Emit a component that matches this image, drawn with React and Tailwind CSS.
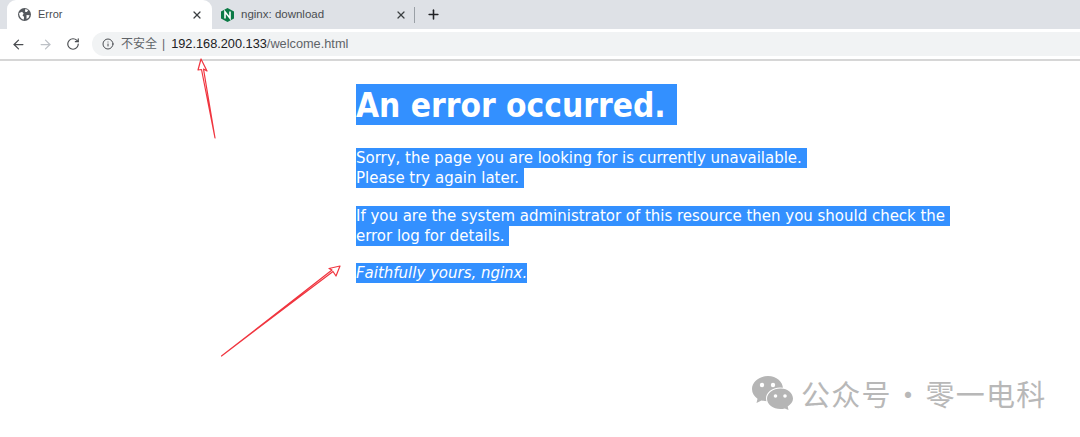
import { ArrowLeft, ArrowRight, RotateCw, Info, X, Plus } from 'lucide-react';

const Line = ({ children, className = '' }) => (
  <div className={`w-fit whitespace-pre bg-[#3390ff] text-white ${className}`}>{children}</div>
);

const GlobeIcon = () => (
  <svg width="13" height="13" viewBox="0 0 16 16">
    <circle cx="8" cy="8" r="8" fill="#55595e" />
    <path d="M1.500 6 5 4.500 7 7 5.500 9l2 2-.5 3.500C4 13.500 2 11 1.500 8zM9 1.200l3.500 1.300-1.500 2.500-2.500-.5zM10.500 8.500l3.800.3-1.300 3.200-2.500 1.500z" fill="#fff" />
  </svg>
);

const NginxIcon = () => (
  <svg width="13" height="14" viewBox="0 0 13 14">
    <polygon points="6.500,0 13,3.500 13,10.500 6.500,14 0,10.500 0,3.500" fill="#0b7a45" />
    <path d="M4 10.500V3.800l5 6.400V3.500" fill="none" stroke="#fff" strokeWidth="1.600" />
  </svg>
);

const WechatIcon = () => (
  <svg width="42" height="34" viewBox="0 0 42 34" className="shrink-0">
    <path d="M16 0C7.500 0 0 5.600 0 13c0 4 2.200 7.500 5.500 9.800L4.500 27l5-2.600c2 .6 4 .9 6.500.9 7 0 15-5.300 15-12.300C31 5.600 24.500 0 16 0z" fill="#b5b5b5" />
    <circle cx="10" cy="9" r="2.200" fill="#fff" />
    <circle cx="21" cy="9" r="2.200" fill="#fff" />
    <path d="M28 11.500c-8 0-14 5-14 11s6 10.500 14 10.500c1.600 0 3-.2 4.500-.6L37 34l-1-4c3.400-2 6-4.300 6-7.500 0-6-6-11-14-11z" fill="#fff" />
    <path d="M28.500 12.500c-7.500 0-13.500 4.600-13.500 10.200S21 33 28.500 33c1.500 0 3-.2 4.300-.6l3.700 1.600-.8-3.600c3-2 5.300-4.700 5.300-7.700 0-5.600-5.500-10.200-12-10.200z" fill="#b5b5b5" />
    <circle cx="23.500" cy="20" r="1.800" fill="#fff" />
    <circle cx="33" cy="20" r="1.800" fill="#fff" />
  </svg>
);

const Arrows = () => (
  <svg width="1080" height="437" viewBox="0 0 1080 437" fill="none" className="absolute left-0 top-0 pointer-events-none">
    <path d="M215 138 203.500 69 207 71 201 59 198 70 201.500 69.500z" stroke="#f0353f" strokeWidth="1.200" strokeLinejoin="round" />
    <path d="M221.500 356 333 271.500 336 276 340 266 329 268.500 332 270z" stroke="#f0353f" strokeWidth="1.200" strokeLinejoin="round" />
  </svg>
);

export default function App() {
  return (
    <div className="relative w-[1080px] h-[437px] overflow-hidden bg-white font-['Liberation_Sans','Noto_Sans_CJK_SC',sans-serif]">
      {/* Tab strip */}
      <div className="flex h-[29px] items-end bg-[#dee1e6] pl-[7px] text-[11px] text-[#4a4d51]">
        <div className="flex h-[29px] w-[205px] items-center rounded-t-[9px] bg-white pl-[11px] pr-[9px]">
          <GlobeIcon />
          <span className="ml-[7px] flex-1">Error</span>
          <X size={12} strokeWidth={2.500} className="text-[#3c4043]" />
        </div>
        <div className="flex h-[29px] w-[203px] items-center pl-[9px]">
          <NginxIcon />
          <span className="ml-[7px] flex-1 text-[11.500px]">nginx: download</span>
          <X size={12} strokeWidth={2.500} className="text-[#3c4043]" />
          <div className="ml-[7px] h-[16px] w-px bg-[#9aa0a6]" />
        </div>
        <div className="flex h-[29px] items-center pl-[11px]">
          <Plus size={15} strokeWidth={2.500} className="text-[#202124]" />
        </div>
      </div>

      {/* Toolbar */}
      <div className="flex h-[32px] items-center border-b-2 border-[#d6d6d6] bg-white pl-[11px]">
        <ArrowLeft size={15} strokeWidth={2} className="text-[#4a4d51]" />
        <ArrowRight size={15} strokeWidth={2} className="ml-[12px] text-[#bdc1c6]" />
        <RotateCw size={14} strokeWidth={2} className="ml-[13px] text-[#4a4d51]" />
        <div className="ml-[12px] flex h-[24px] flex-1 items-center rounded-l-full bg-[#f1f3f4] pl-[10px] text-[12px]">
          <Info size={12} strokeWidth={2} className="text-[#4a4d51]" />
          <span className="ml-[7px] text-[#5f6368]">不安全</span>
          <span className="ml-[5px] text-[#5f6368]">|</span>
          <span className="ml-[6px] text-[12.750px] text-[#202124]">
            192.168.200.133<span className="text-[#5f6368]">/welcome.html</span>
          </span>
        </div>
      </div>

      {/* Error page */}
      <div className="pl-[356px] pt-[23px] font-['DejaVu_Sans_Condensed','DejaVu_Sans',sans-serif] text-[16.650px] leading-[20px]">
        <Line className="w-[321px]! h-[41px] text-[33.200px] font-bold leading-[44px]">An error occurred.</Line>
        <div className="mt-[23px]">
          <Line>Sorry, the page you are looking for is currently unavailable. </Line>
          <Line>Please try again later. </Line>
        </div>
        <div className="mt-[18px]">
          <Line>If you are the system administrator of this resource then you should check the </Line>
          <Line>error log for details. </Line>
        </div>
        <Line className="mt-[17px] italic">Faithfully yours, nginx.</Line>
      </div>

      <Arrows />

      {/* Watermark */}
      <div className="absolute left-[752px] top-[375px] flex items-center text-[#b8b8b8]">
        <WechatIcon />
        <span className="ml-[7px] whitespace-pre text-[29px] leading-[36px] tracking-[1.250px] [word-spacing:-6px] font-['Noto_Sans_CJK_SC',sans-serif]">公众号 · 零一电科</span>
      </div>
    </div>
  );
}
